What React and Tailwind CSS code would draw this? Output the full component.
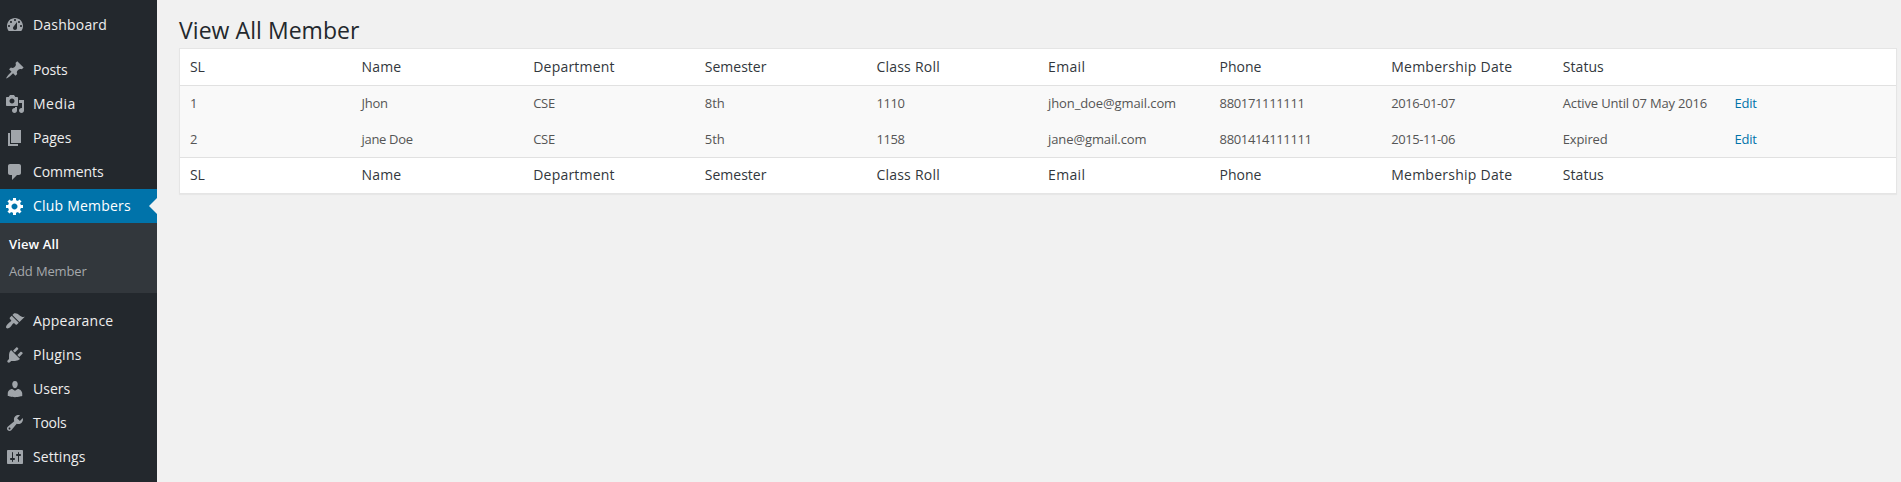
const ICONS = {
  dashboard:
    'M3.76 16h12.48c1.1-1.37 1.76-3.11 1.76-5 0-4.42-3.58-8-8-8s-8 3.58-8 8c0 1.89.66 3.63 1.76 5zM10 4c.55 0 1 .45 1 1s-.45 1-1 1-1-.45-1-1 .45-1 1-1zM6 6c.55 0 1 .45 1 1s-.45 1-1 1-1-.45-1-1 .45-1 1-1zm8 0c.55 0 1 .45 1 1s-.45 1-1 1-1-.45-1-1 .45-1 1-1zm-5.37 5.55L12 7v6c0 1.1-.9 2-2 2s-2-.9-2-2c0-.57.24-1.08.63-1.45zM4 10c.55 0 1 .45 1 1s-.45 1-1 1-1-.45-1-1 .45-1 1-1zm12 0c.55 0 1 .45 1 1s-.45 1-1 1-1-.45-1-1 .45-1 1-1z',
  posts:
    'M10.44 3.02l1.82-1.82 6.36 6.35-1.83 1.82c-1.05-.68-2.48-.57-3.41.36l-.75.75c-.92.93-1.04 2.35-.35 3.41l-1.83 1.82-2.41-2.41-2.8 2.79c-.42.42-3.38 2.71-3.8 2.29s1.86-3.39 2.28-3.81l2.79-2.79L4.1 9.36l1.83-1.82c1.05.69 2.48.57 3.4-.36l.75-.75c.93-.92 1.05-2.35.36-3.41z',
  media:
    'M13 11V4c0-.55-.45-1-1-1h-1.67L9 1H5L3.67 3H2c-.55 0-1 .45-1 1v7c0 .55.45 1 1 1h10c.55 0 1-.45 1-1zM7 4.5c1.38 0 2.5 1.12 2.5 2.5S8.38 9.5 7 9.5 4.5 8.38 4.5 7 5.62 4.5 7 4.5zM14 6h5v10.5c0 1.38-1.12 2.5-2.5 2.5S14 17.88 14 16.5s1.12-2.5 2.5-2.5c.17 0 .34.02.5.05V9h-3V6zm-4 8.05V13h2v3.5c0 1.38-1.12 2.5-2.5 2.5S7 17.88 7 16.5 8.12 14 9.5 14c.17 0 .34.02.5.05z',
  pages: 'M6 15V2h10v13H6zm-1 1h8v2H3V5h2v11z',
  comments:
    'M5 2h9c1.1 0 2 .9 2 2v7c0 1.1-.9 2-2 2h-2l-5 5v-5H5c-1.1 0-2-.9-2-2V4c0-1.1.9-2 2-2z',
  generic:
    'M18 12h-2.18c-.17.7-.44 1.35-.81 1.93l1.54 1.54-2.1 2.1-1.54-1.54c-.58.36-1.23.63-1.91.79V19H8v-2.18c-.68-.16-1.33-.43-1.91-.79l-1.54 1.54-2.12-2.12 1.54-1.54c-.36-.58-.63-1.23-.79-1.91H1V9.03h2.17c.16-.7.44-1.35.8-1.94L2.43 5.55l2.1-2.1 1.54 1.54c.58-.37 1.24-.64 1.93-.81V2h3v2.18c.68.16 1.33.43 1.91.79l1.54-1.54 2.12 2.12-1.54 1.54c.36.59.64 1.24.8 1.94H18V12zm-8.5 1.5c1.66 0 3-1.34 3-3s-1.34-3-3-3-3 1.34-3 3 1.34 3 3 3z',
  appearance:
    'M14.48 11.06L7.41 3.99l1.5-1.5c.5-.56 2.3-.47 3.51.32 1.21.8 1.43 1.28 2.91 2.1 1.18.64 2.45 1.26 4.45.85zm-.71.71L6.7 4.7 4.93 6.47c-.39.39-.39 1.02 0 1.41l1.06 1.06c.39.39.39 1.03 0 1.42-.6.6-1.43 1.11-2.21 1.69-.35.26-.7.53-1.01.84C1.43 14.23.4 16.08 1.4 17.07c.99 1 2.84-.03 4.18-1.36.31-.31.58-.66.85-1.02.57-.78 1.08-1.61 1.69-2.21.39-.39 1.02-.39 1.41 0l1.06 1.06c.39.39 1.02.39 1.41 0z',
  plugins:
    'M13.11 4.36L9.87 7.6 8 5.73l3.24-3.24c.35-.34 1.05-.2 1.56.32.52.51.66 1.21.31 1.55zm-8 1.77l.91-1.12 9.01 9.01-1.19.84c-.71.71-2.63 1.16-3.82 1.16H6.14L4.9 17.26c-.59.59-1.54.59-2.12 0-.59-.58-.59-1.53 0-2.12l1.24-1.24v-3.88c0-1.13.4-3.19 1.09-3.89zm7.26 3.97l3.24-3.24c.34-.35 1.04-.21 1.55.31.52.51.66 1.21.31 1.55l-3.24 3.25z',
  users:
    'M10 9.25c-2.27 0-2.73-3.44-2.73-3.44C7 4.02 7.82 2 9.97 2c2.16 0 2.98 2.02 2.71 3.81 0 0-.41 3.44-2.68 3.44zm0 2.57L12.72 10c2.39 0 4.52 2.33 4.52 4.53v2.49s-3.65 1.13-7.24 1.13c-3.65 0-7.24-1.13-7.24-1.13v-2.49c0-2.25 1.94-4.48 4.47-4.48z',
  tools:
    'M16.68 9.77c-1.34 1.34-3.3 1.67-4.95.99l-5.41 6.52c-.99.99-2.59.99-3.58 0s-.99-2.59 0-3.57l6.52-5.42c-.68-1.65-.35-3.61.99-4.95 1.28-1.28 3.12-1.62 4.72-1.06l-2.89 2.89 2.82 2.82 2.86-2.87c.53 1.58.18 3.39-1.08 4.65zM3.81 16.21c.4.39 1.04.39 1.43 0 .4-.4.4-1.04 0-1.43-.39-.4-1.03-.4-1.43 0-.39.39-.39 1.03 0 1.43z',
  settings:
    'M18 16V4c0-.55-.45-1-1-1H3c-.55 0-1 .45-1 1v12c0 .55.45 1 1 1h14c.55 0 1-.45 1-1zM8 11h1c.55 0 1 .45 1 1s-.45 1-1 1H8v1.5c0 .28-.22.5-.5.5s-.5-.22-.5-.5V13H6c-.55 0-1-.45-1-1s.45-1 1-1h1V5.5c0-.28.22-.5.5-.5s.5.22.5.5V11zm5-2h-1c-.55 0-1-.45-1-1s.45-1 1-1h1V5.5c0-.28.22-.5.5-.5s.5.22.5.5V7h1c.55 0 1 .45 1 1s-.45 1-1 1h-1v5.5c0 .28-.22.5-.5.5s-.5-.22-.5-.5V9z',
};

function MenuItem({ icon, label, active, tracking = '' }) {
  return (
    <a
      href="#"
      className={`relative flex h-[34px] items-center gap-2 pl-[5px] text-sm leading-[18px] ${
        active ? 'bg-[#0073aa] text-white' : 'text-[#eeeeee]'
      }`}
    >
      <svg
        viewBox="0 0 20 20"
        fillRule="evenodd"
        className={`size-5 shrink-0 ${active ? 'fill-white' : 'fill-[#a0a5aa]'}`}
      >
        <path d={ICONS[icon]} />
      </svg>
      <span className={tracking}>{label}</span>
      {active && (
        <span className="absolute top-1/2 right-0 -translate-y-1/2 border-y-8 border-r-8 border-y-transparent border-r-[#f1f1f1]" />
      )}
    </a>
  );
}

function Sidebar() {
  return (
    <nav className="w-[157px] shrink-0 bg-[#23282d] pt-2">
      <MenuItem icon="dashboard" label="Dashboard" tracking="tracking-[0.2px]" />
      <div className="h-[11px]" />
      <MenuItem icon="posts" label="Posts" tracking="tracking-[-0.15px]" />
      <MenuItem icon="media" label="Media" tracking="tracking-[0.5px]" />
      <MenuItem icon="pages" label="Pages" />
      <MenuItem icon="comments" label="Comments" tracking="tracking-[-0.1px]" />
      <MenuItem icon="generic" label="Club Members" tracking="tracking-[0.21px]" active />
      <div className="flex h-[70px] flex-col bg-[#32373c] pt-2 pl-[9px] text-[13px]">
        <a href="#" className="h-[27px] leading-[27px] font-semibold tracking-[0.13px] text-white">
          View All
        </a>
        <a href="#" className="h-[27px] leading-[27px] tracking-[-0.15px] text-[#a5a8ab]">
          Add Member
        </a>
      </div>
      <div className="h-[11px]" />
      <MenuItem icon="appearance" label="Appearance" tracking="tracking-[0.21px]" />
      <MenuItem icon="plugins" label="Plugins" tracking="tracking-[0.24px]" />
      <MenuItem icon="users" label="Users" />
      <MenuItem icon="tools" label="Tools" tracking="tracking-[-0.3px]" />
      <MenuItem icon="settings" label="Settings" tracking="tracking-[0.07px]" />
    </nav>
  );
}

const COLUMNS = [
  { name: 'SL', head: 'tracking-[-0.3px]', body: '' },
  { name: 'Name', head: 'tracking-[0.14px]', body: 'tracking-[-0.33px]' },
  { name: 'Department', head: 'tracking-[0.21px]', body: 'tracking-[-0.31px]' },
  { name: 'Semester', head: '', body: '' },
  { name: 'Class Roll', head: 'tracking-[0.23px]', body: 'tracking-[-0.37px]' },
  { name: 'Email', head: 'tracking-[0.35px]', body: 'tracking-[-0.1px]' },
  { name: 'Phone', head: '', body: 'tracking-[-0.35px]' },
  { name: 'Membership Date', head: 'tracking-[0.25px]', body: 'tracking-[-0.41px]' },
  { name: 'Status', head: 'tracking-[0.06px]', body: 'tracking-[-0.17px]' },
  { name: '', head: '', body: '' },
];

const MEMBERS = [
  ['1', 'Jhon', 'CSE', '8th', '1110', 'jhon_doe@gmail.com', '880171111111', '2016-01-07', 'Active Until 07 May 2016'],
  ['2', 'jane Doe', 'CSE', '5th', '1158', 'jane@gmail.com', '8801414111111', '2015-11-06', 'Expired'],
];

function HeadingRow({ className }) {
  return (
    <div className={`grid grid-cols-10 text-sm text-[#32373c] ${className}`}>
      {COLUMNS.map(({ name, head }, i) => (
        <div key={i} className={`px-2.5 whitespace-nowrap ${head}`}>
          {name}
        </div>
      ))}
    </div>
  );
}

function MembersTable() {
  return (
    <div className="border border-[#e5e5e5] bg-white shadow-[0_1px_1px_rgba(0,0,0,0.04)]">
      <HeadingRow className="h-[37px] border-b border-[#e1e1e1] leading-9" />
      <div className="bg-[#f9f9f9] text-[13px] text-[#555555]">
        {MEMBERS.map((row) => (
          <div key={row[0]} className="grid h-[35.5px] grid-cols-10 leading-[35.5px]">
            {row.map((value, i) => (
              <div key={i} className={`px-2.5 whitespace-nowrap ${COLUMNS[i].body}`}>
                {value}
              </div>
            ))}
            <div className="px-2.5">
              <a href="#" className="tracking-[-0.2px] text-[#0073aa]">
                Edit
              </a>
            </div>
          </div>
        ))}
      </div>
      <HeadingRow className="h-9 border-t border-[#e1e1e1] leading-[33px]" />
    </div>
  );
}

export default function App() {
  return (
    <div className="flex h-[482px] overflow-hidden bg-[#f1f1f1] font-['Open_Sans',sans-serif]">
      <Sidebar />
      <main className="min-w-0 flex-1 pt-[15px] pr-1 pl-[22px]">
        <h1 className="h-[33px] text-[23px] leading-[30px] tracking-[0.06px] text-[#23282d]">View All Member</h1>
        <MembersTable />
      </main>
    </div>
  );
}
